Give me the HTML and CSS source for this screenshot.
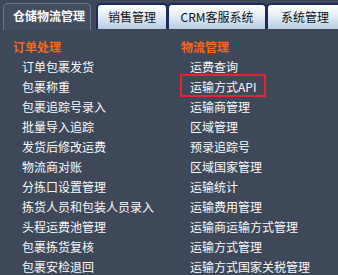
FILE: index.html
```
<!DOCTYPE html>
<html lang="zh-CN">
<head>
  <meta charset="UTF-8" />
  <title>仓储物流管理</title>
  <link rel="stylesheet" href="styles.css">
</head>
<body>
  <nav class="tabs">
    <a class="tab active">仓储物流管理</a>
    <a class="tab">销售管理</a>
    <a class="tab">CRM客服系统</a>
    <a class="tab">系统管理</a>
  </nav>

  <main class="menu">
    <section class="group">
      <h2>订单处理</h2>
      <ul>
        <li>订单包裹发货</li>
        <li>包裹称重</li>
        <li>包裹追踪号录入</li>
        <li>批量导入追踪</li>
        <li>发货后修改运费</li>
        <li>物流商对账</li>
        <li>分拣口设置管理</li>
        <li>拣货人员和包装人员录入</li>
        <li>头程运费池管理</li>
        <li>包裹拣货复核</li>
        <li>包裹安检退回</li>
      </ul>
    </section>

    <section class="group">
      <h2>物流管理</h2>
      <ul>
        <li>运费查询</li>
        <li><span class="marked">运输方式API</span></li>
        <li>运输商管理</li>
        <li>区域管理</li>
        <li>预录追踪号</li>
        <li>区域国家管理</li>
        <li>运输统计</li>
        <li>运输费用管理</li>
        <li>运输商运输方式管理</li>
        <li>运输方式管理</li>
        <li>运输方式国家关税管理</li>
      </ul>
    </section>
  </main>
</body>
</html>
```

FILE: styles.css
```
* {
  margin: 0;
  padding: 0;
  box-sizing: border-box;
}
body {
  background: #3e4859;
  color: #fff;
  font-family: "Noto Sans CJK SC", "DejaVu Sans", sans-serif;
  font-size: 12px;
  overflow: hidden;
  width: 338px;
  height: 275px;
}
.tabs {
  display: flex;
  padding: 3px 0 0 3px;
  height: 29px;
  white-space: nowrap;
}
.tab {
  display: block;
  height: 26px;
  line-height: 24px;
  text-align: center;
  color: #111;
  background: linear-gradient(#ffffff, #e4edf7 45%, #b8cbe2);
  border: 2px solid #1d2a5c;
  border-bottom: none;
  border-radius: 5px 5px 0 0;
  flex-shrink: 0;
  font-size: 12px;
}
.tab:nth-child(2) {
  width: 72px;
}
.tab:nth-child(3) {
  width: 100px;
  margin-left: -1px;
}
.tab:nth-child(4) {
  width: 80px;
  margin-left: -1px;
  text-align: left;
  padding-left: 13px;
}
.tab.active {
  width: 88px;
  margin-right: 5px;
  color: #fff;
  font-weight: bold;
  background: #434e61;
  border: 1px solid #6c7789;
  border-bottom: none;
  height: 27px;
  text-align: left;
  padding-left: 9px;
}
.menu {
  display: grid;
  grid-template-columns: 168px 168px;
  padding: 8px 0 0 13px;
}
.group h2 {
  font-size: 12px;
  font-weight: bold;
  color: #f4691f;
  line-height: 20px;
}
.group ul {
  list-style: none;
  padding-left: 9px;
}
.group li {
  line-height: 20px;
  color: #fafafa;
}
.marked {
  position: relative;
  display: inline-block;
  line-height: 20px;
}
.marked::after {
  content: "";
  position: absolute;
  left: -10px;
  right: -10px;
  top: -3px;
  bottom: 0;
  border: 2px solid #e3262d;
}
```
